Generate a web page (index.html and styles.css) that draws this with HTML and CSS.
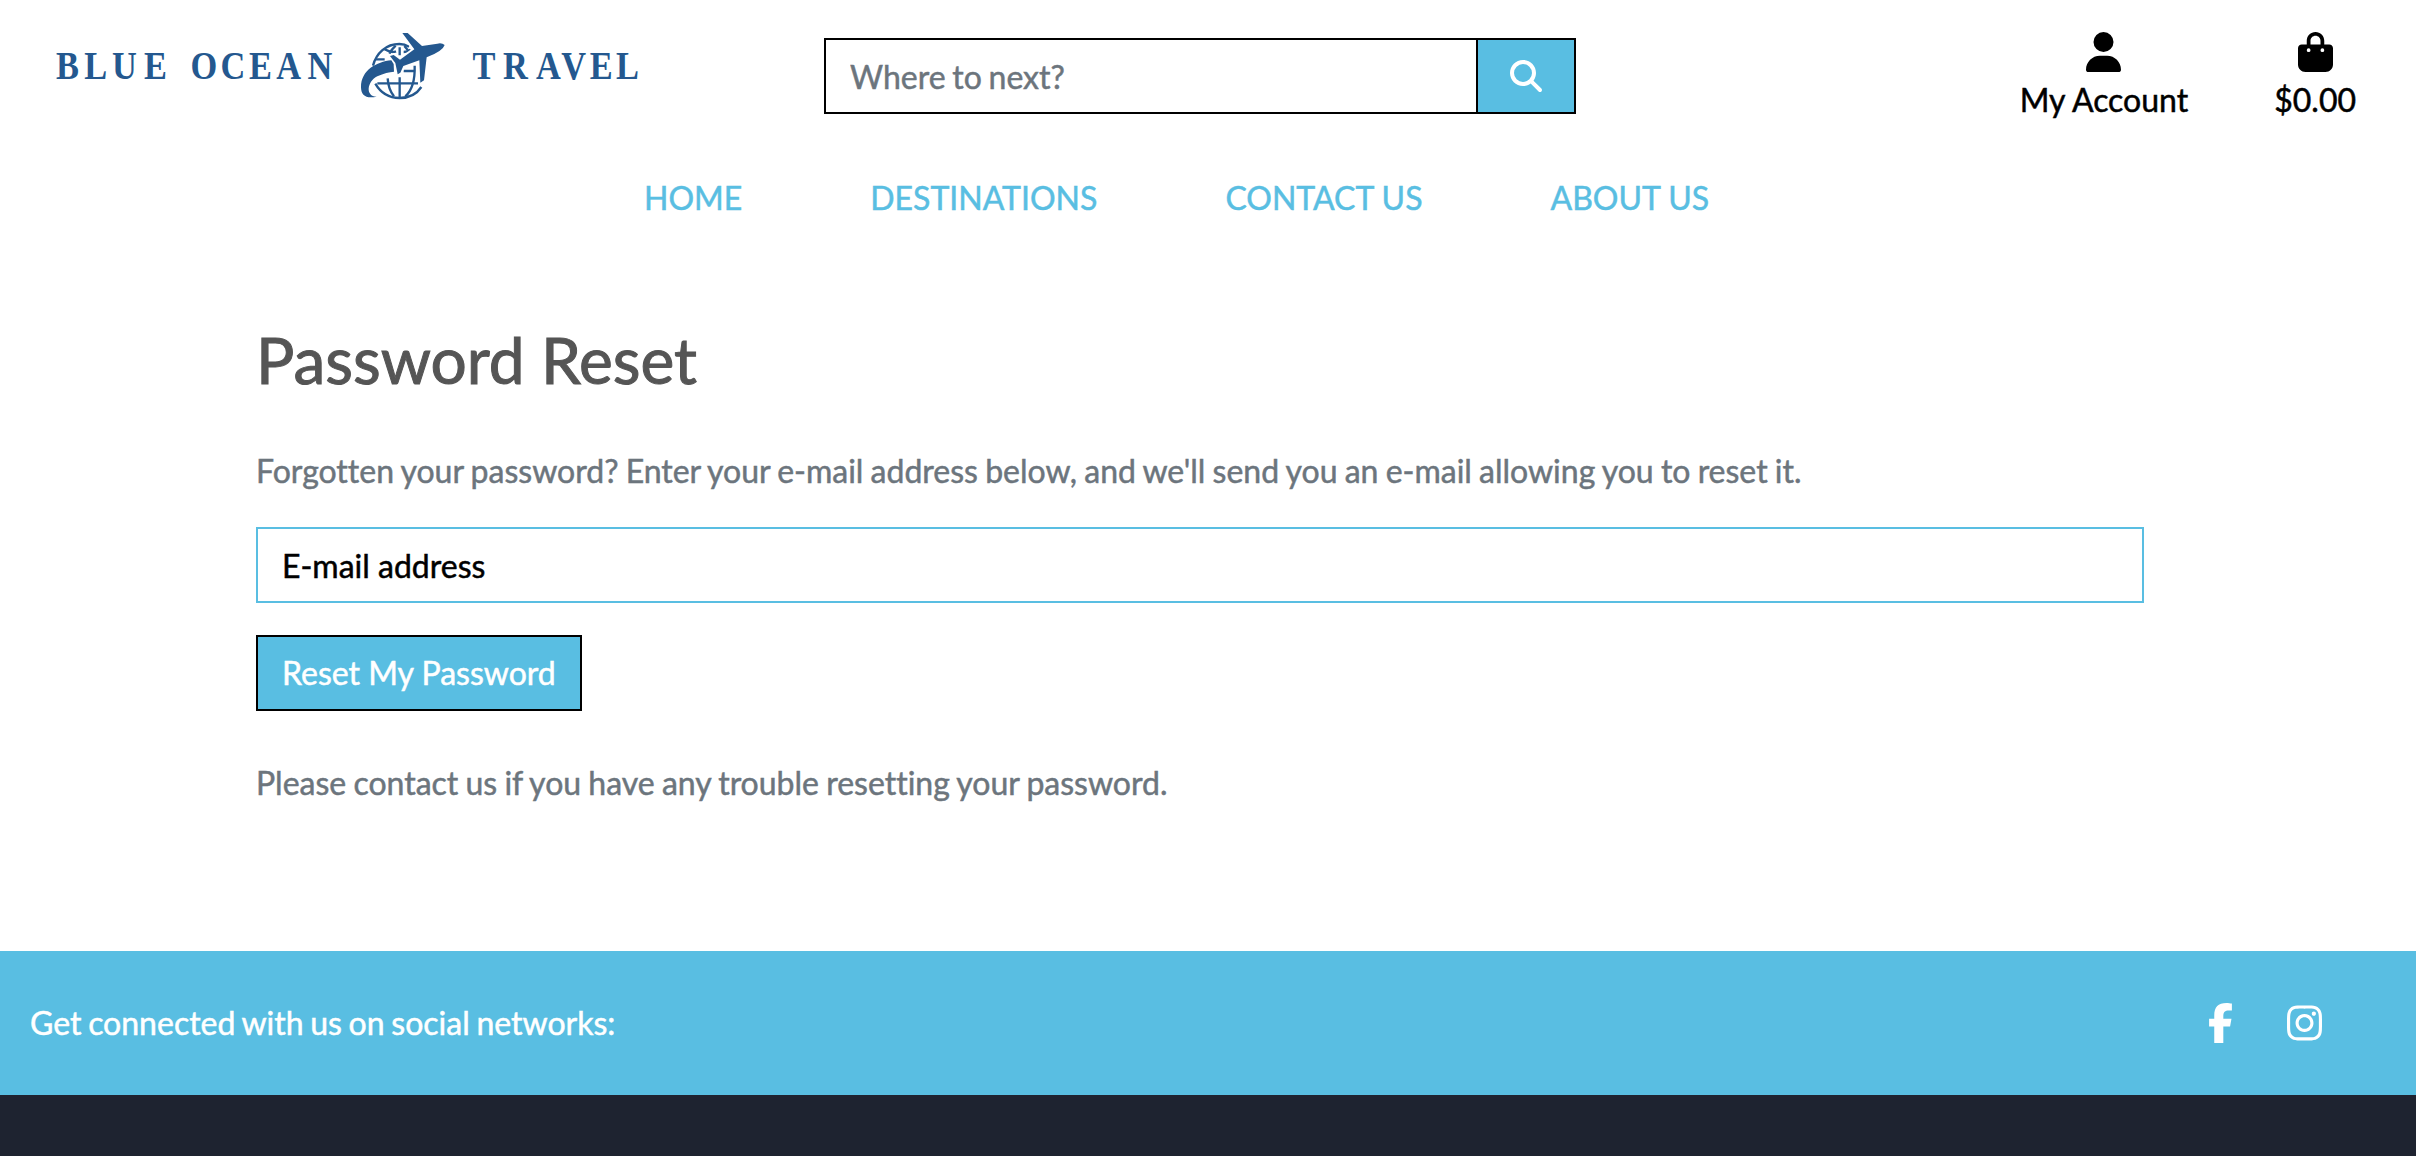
FILE: index.html
```html
<!DOCTYPE html>
<html lang="en">
<head>
<meta charset="utf-8">
<title>Blue Ocean Travel</title>
<link rel="stylesheet" href="styles.css">
</head>
<body>
<header class="header">
  <a class="logo" href="#">
    <svg class="logo-art" viewBox="50 24 600 84" role="img" aria-label="Blue Ocean Travel">
      <g class="logo-text" transform="scale(.87 1)">
        <text y="79" x="64.5 96.8 128.8 165.4">BLUE</text>
        <text y="79" x="219 253.5 286.3 317.5 353.6">OCEAN</text>
        <text y="79" x="543 578.2 616 645 678 708">TRAVEL</text>
      </g>
      <g transform="translate(350 20) scale(.33333)">
        <g class="globe">
          <path d="M69 137C79 100 108 72 148 72Q164 72 177 80"/>
          <path d="M76 191C92 219 118 234 149 234C180 234 201 221 214 201"/>
          <path d="M82 190H204M161 153H197M149 172V234M149 82V106M113 175Q115 208 132 229M194 137Q196 202 166 229M75 118H104M118 101Q125 88 137 77M163 78Q172 88 178 97M104 88Q124 100 138 94M161 96Q174 96 182 89"/>
        </g>
        <path class="plane-gap" d="M284 75Q276 68 262 71L216 78L173 39H157L193 88L150 119L131 105L120 108L136 129L143 163L151 158L160 138L208 121L211 188L222 181L230 112Q279 93 284 75Z"/>
        <path class="plane" d="M284 75Q276 68 262 71L216 78L173 39H157L193 88L150 119L131 105L120 108L136 129L143 163L151 158L160 138L208 121L211 188L222 181L230 112Q279 93 284 75Z"/>
        <path class="plane" d="M124 121C80 125 33 151 33 201C33 226 48 237 80 230C45 230 51 184 82 169C101 160 118 156 132 155L131 132Z"/>
      </g>
    </svg>
  </a>
  <form class="search">
    <input class="search-input" type="text" placeholder="Where to next?">
    <button class="search-button" type="button" aria-label="Search">
      <svg class="icon-search" viewBox="0 0 512 512"><path d="M416 208c0 45.900-14.900 88.300-40 122.700L502.600 457.400c12.500 12.500 12.500 32.800 0 45.300s-32.800 12.500-45.300 0L330.700 376c-34.400 25.200-76.800 40-122.700 40C93.100 416 0 322.900 0 208S93.100 0 208 0S416 93.100 416 208zM208 352a144 144 0 1 0 0-288 144 144 0 1 0 0 288z"/></svg>
    </button>
  </form>
  <div class="tools">
    <a class="tool" href="#">
      <svg class="icon" viewBox="0 0 448 512"><path d="M224 256A128 128 0 1 0 224 0a128 128 0 1 0 0 256zm-45.700 48C79.800 304 0 383.800 0 482.300C0 498.700 13.300 512 29.700 512H418.300c16.400 0 29.700-13.300 29.700-29.700C448 383.800 368.200 304 269.700 304H178.300z"/></svg>
      <span>My Account</span>
    </a>
    <a class="tool" href="#">
      <svg class="icon" viewBox="0 0 448 512"><path d="M160 112c0-35.300 28.700-64 64-64s64 28.700 64 64v48H160V112zm-48 48H48c-26.500 0-48 21.500-48 48V416c0 53 43 96 96 96H352c53 0 96-43 96-96V208c0-26.500-21.500-48-48-48H336V112C336 50.100 285.900 0 224 0S112 50.100 112 112v48zm24 48a24 24 0 1 1 0 48 24 24 0 1 1 0-48zm152 24a24 24 0 1 1 48 0 24 24 0 1 1 -48 0z"/></svg>
      <span>$0.00</span>
    </a>
  </div>
</header>
<nav class="nav">
  <a href="#">HOME</a>
  <a href="#">DESTINATIONS</a>
  <a href="#">CONTACT US</a>
  <a href="#">ABOUT US</a>
</nav>
<main class="main">
  <h2 class="title">Password Reset</h2>
  <p class="text">Forgotten your password? Enter your e-mail address below, and we'll send you an e-mail allowing you to reset it.</p>
  <form class="reset">
    <input class="email" type="email" placeholder="E-mail address">
    <button class="submit" type="button">Reset My Password</button>
  </form>
  <p class="text">Please contact us if you have any trouble resetting your password.</p>
</main>
<footer class="footer">
  <div class="social">
    <span class="social-text">Get connected with us on social networks:</span>
    <div class="social-links">
      <a href="#"><svg class="icon-facebook" viewBox="0 0 320 512"><path d="M80 299.300V512H196V299.300h86.500l18-97.800H196V166.900c0-51.700 20.300-71.500 72.700-71.500c16.300 0 29.400 .4 37 1.200V7.900C291.400 4 256.400 0 236.200 0C129.300 0 80 50.500 80 159.400v42.100H14v97.800H80z"/></svg></a>
      <a href="#"><svg class="icon" viewBox="0 0 448 512"><path d="M224.100 141c-63.600 0-114.900 51.300-114.900 114.900s51.300 114.900 114.900 114.900S339 319.500 339 255.900 287.700 141 224.100 141zm0 189.600c-41.100 0-74.700-33.500-74.700-74.700s33.500-74.700 74.700-74.700 74.700 33.500 74.700 74.700-33.600 74.700-74.700 74.700zm146.400-194.300c0 14.900-12 26.800-26.800 26.800-14.900 0-26.800-12-26.800-26.800s12-26.800 26.800-26.800 26.800 12 26.800 26.800zm76.100 27.200c-1.700-35.900-9.900-67.700-36.200-93.900-26.200-26.200-58-34.400-93.900-36.200-37-2.100-147.900-2.100-184.900 0-35.800 1.700-67.600 9.900-93.900 36.100s-34.400 58-36.200 93.900c-2.100 37-2.100 147.900 0 184.900 1.700 35.900 9.900 67.700 36.200 93.900s58 34.400 93.900 36.200c37 2.100 147.900 2.100 184.900 0 35.900-1.700 67.700-9.900 93.900-36.200 26.200-26.200 34.400-58 36.200-93.900 2.100-37 2.100-147.800 0-184.800zM398.800 388c-7.800 19.600-22.900 34.700-42.600 42.600-29.500 11.700-99.500 9-132.100 9s-102.700 2.600-132.100-9c-19.600-7.800-34.700-22.900-42.600-42.600-11.700-29.500-9-99.500-9-132.100s-2.600-102.700 9-132.100c7.800-19.600 22.900-34.700 42.600-42.600 29.500-11.700 99.500-9 132.100-9s102.700-2.600 132.100 9c19.600 7.800 34.700 22.900 42.600 42.600 11.700 29.500 9 99.500 9 132.100s2.700 102.700-9 132.100z"/></svg></a>
    </div>
  </div>
</footer>
</body>
</html>
```
FILE: styles.css
```css
* { box-sizing: border-box; }

html { overflow: hidden; }

body {
  margin: 0;
  height: 1156px;
  display: flex;
  flex-direction: column;
  background: #fff;
  color: #000;
  font: 400 32px/48px Lato, "Noto Sans", sans-serif;
  font-variant-ligatures: none;
  -webkit-text-stroke: .5px currentColor;
  overflow: hidden;
}

a { color: inherit; text-decoration: none; }
svg { display: block; fill: currentColor; }
p, h2 { margin: 0; }
input, button { font: inherit; border-radius: 0; margin: 0; }

.header {
  height: 151px;
  display: grid;
  grid-template-columns: 824px 752px 1fr;
  align-items: start;
}

.logo { padding: 24px 0 0 50px; color: #24588f; -webkit-text-stroke: 0; }
.logo-art { width: 600px; height: 84px; }
.logo-text { font: bold 39.5px "Liberation Serif", serif; }
.globe { fill: none; stroke: currentColor; stroke-width: 7; }
.plane-gap { fill: #fff; stroke: #fff; stroke-width: 11; }

.search { display: flex; margin-top: 38px; height: 76px; }
.search-input {
  flex: 1;
  min-width: 0;
  padding: 2px 24px 0;
  border: 2px solid #000;
  background: #fff;
  word-spacing: -1.5px;
}
.search-input::placeholder { color: #6c757d; opacity: 1; }
.search-button {
  width: 100px;
  margin-left: -2px;
  padding: 0;
  display: flex;
  align-items: center;
  justify-content: center;
  border: 2px solid #000;
  background: #59bee2;
  color: #fff;
}
.icon-search { width: 32px; height: 32px; }

.tools {
  display: flex;
  justify-content: flex-end;
  gap: 86px;
  padding: 32px 60px 0 0;
}
.tool { display: flex; flex-direction: column; align-items: center; gap: 4px; }
.icon { width: 35px; height: 40px; }

.nav {
  height: 96px;
  padding: 23px 0 0 644px;
  display: flex;
  gap: 128px;
  color: #59bee2;
}

.main {
  flex: 1;
  padding: 74px 272px 0 256px;
}
.title { color: #555; font-weight: 400; font-size: 64px; line-height: 77px; -webkit-text-stroke-width: 1px; }
.text { color: #6c757d; word-spacing: -1px; }
.title + .text { margin-top: 49px; }
.reset {
  display: flex;
  flex-direction: column;
  align-items: flex-start;
  gap: 32px;
  margin: 32px 0 48px;
}
.email {
  width: 100%;
  height: 76px;
  padding: 0 24px;
  border: 2px solid #59bee2;
}
.email::placeholder { color: #000; opacity: 1; }
.submit {
  height: 76px;
  padding: 0 24px;
  border: 2px solid #000;
  background: #59bee2;
  color: #fff;
}

.footer { height: 205px; background: #1e2330; color: #fff; }
.social {
  height: 144px;
  padding: 0 94px 0 30px;
  display: flex;
  align-items: center;
  justify-content: space-between;
  background: #59bee2;
}
.social-text { word-spacing: -1.5px; }
.social-links { display: flex; gap: 54px; }
.icon-facebook { width: 25px; height: 40px; }
```
